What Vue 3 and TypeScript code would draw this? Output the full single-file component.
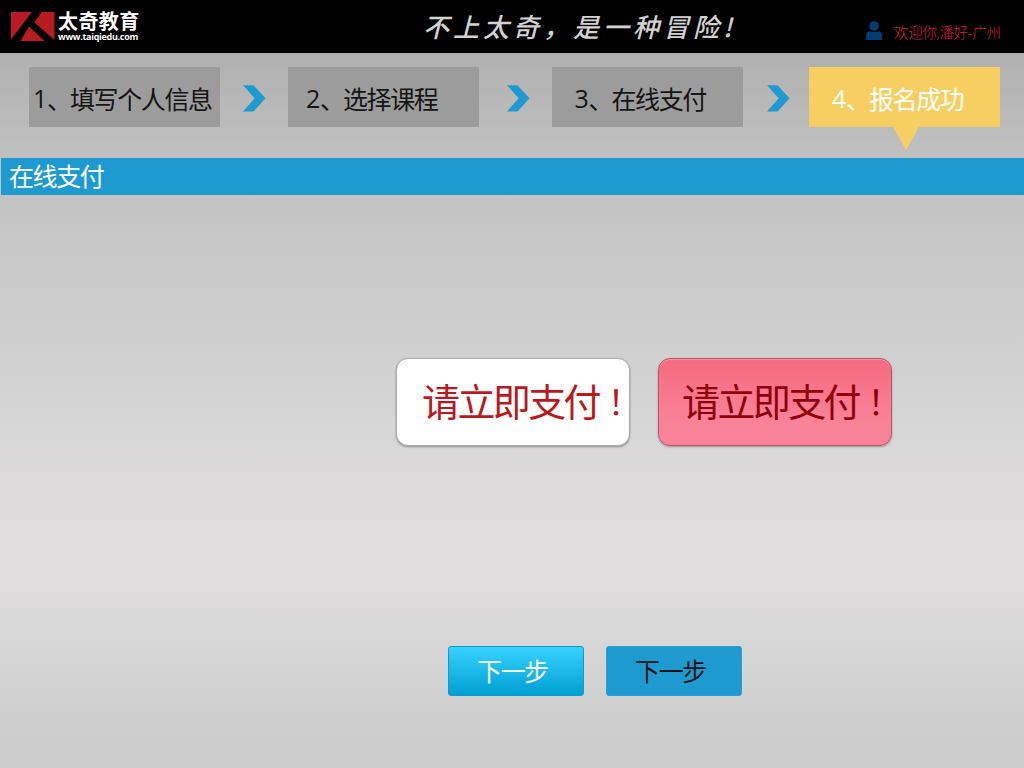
<script setup lang="ts">
interface Step {
  num: number
  label: string
  active: boolean
}

const steps: Step[] = [
  { num: 1, label: '填写个人信息', active: false },
  { num: 2, label: '选择课程', active: false },
  { num: 3, label: '在线支付', active: false },
  { num: 4, label: '报名成功', active: true },
]
</script>

<template>
  <div class="page">
    <header class="header">
      <div class="brand">
        <svg class="mark" width="44" height="29" viewBox="0 0 44 29">
          <path d="M0 0H21L0 27.5Z" fill="#b81c22" />
          <path d="M30.5 0H43.5V28L23.5 10.5Z" fill="#b81c22" />
          <path d="M18 14.5L33.5 29H9.5Z" fill="#b81c22" />
        </svg>
        <div class="brand-text">
          <span class="brand-name">太奇教育</span>
          <span class="brand-url">www.taiqiedu.com</span>
        </div>
      </div>
      <div class="slogan">不上太奇，是一种冒险!</div>
      <div class="user">
        <svg width="17" height="19" viewBox="0 0 17 19">
          <circle cx="8.1" cy="5" r="4.8" fill="#053b73" />
          <path d="M0 19V14.5Q0 10.2 4 10.2Q8.1 12 12.2 10.2Q16 10.2 16 14.5V19Z" fill="#053b73" />
        </svg>
        <span class="welcome">欢迎你,潘好-广州</span>
      </div>
    </header>

    <nav class="steps">
      <template v-for="step in steps" :key="step.num">
        <svg v-if="step.num > 1" :class="['arrow', 'arrow-' + step.num]" width="23" height="27" viewBox="0 0 23 27">
          <path d="M0 0.3H10.5L22.5 13.3L10.5 26.5H0L11.7 13.3Z" fill="#1f9ad0" />
        </svg>
        <div :class="['step', 'step-' + step.num, { active: step.active }]">
          <span class="num">{{ step.num }}</span><span class="mark-sep">、</span><span>{{ step.label }}</span>
        </div>
      </template>
    </nav>

    <h1 class="title">在线支付</h1>

    <div class="pay-row">
      <button class="pay plain"><span>请立即支付</span><span class="bang">！</span></button>
      <button class="pay hot"><span>请立即支付</span><span class="bang">！</span></button>
    </div>

    <div class="next-row">
      <button class="next bright">下一步</button>
      <button class="next flat">下一步</button>
    </div>
  </div>
</template>

<style>
body { margin: 0; overflow: hidden; }
</style>

<style scoped>
.page {
  width: 1024px;
  height: 768px;
  overflow: hidden;
  font-family: "Open Sans", "Noto Sans CJK SC", sans-serif;
  background: linear-gradient(#adabac 0, #b1b1b1 60px, #bfbfbf 145px, #c7c7c7 240px, #d0d0d0 350px, #dddbdc 490px, #dedcdd 590px, #d0d0d0 705px, #cbcbcb 768px);
}
.page, button { box-sizing: border-box; }
.header {
  height: 53px;
  display: flex;
  background: #000;
}
.brand {
  display: flex;
  padding: 12px 0 0 11px;
  width: 423px;
  box-sizing: border-box;
}
.brand-text {
  display: flex;
  flex-direction: column;
  margin: -1px 0 0 3px;
  color: #fff;
  white-space: nowrap;
}
.brand-name {
  font: 700 20px/20px "Noto Sans CJK SC", sans-serif;
  letter-spacing: 0.4px;
}
.brand-url {
  font: 700 9px/12px "Open Sans", sans-serif;
  letter-spacing: -0.3px;
}
.slogan {
  width: 432px;
  padding-top: 6px;
  box-sizing: border-box;
  font: italic 500 26px/40px "Noto Sans CJK SC", sans-serif;
  letter-spacing: 4px;
  color: #d2d2d2;
  white-space: nowrap;
}
.user {
  display: flex;
  padding: 21px 0 0 11px;
}
.welcome {
  margin-left: 11px;
  font: 300 14.5px/24px "Open Sans", "Noto Sans CJK SC", sans-serif;
  letter-spacing: -0.3px;
  color: #d8232b;
  white-space: nowrap;
}
.steps {
  display: flex;
  padding: 14px 0 0 29px;
  height: 105px;
  box-sizing: border-box;
}
.step {
  position: relative;
  width: 191px;
  height: 60px;
  flex: none;
  box-sizing: border-box;
  display: flex;
  background: #9c9c9c;
  color: #151515;
  font-size: 25px;
  line-height: 64px;
  letter-spacing: -1.4px;
  white-space: nowrap;
}
.step-1 { padding-left: 4px; }
.step-2 { padding-left: 18px; }
.step-3, .step-4 { padding-left: 23px; }
.num { width: 14px; line-height: 62px; }
.mark-sep { width: 23px; }
.active { background: #f6ce62; color: #fff; }
.active::after {
  content: "";
  position: absolute;
  left: 84px;
  top: 60px;
  border: solid transparent;
  border-width: 23px 13px 0;
  border-top-color: #f6ce62;
}
.arrow { flex: none; margin-top: 18px; }
.arrow-2 { margin-left: 23px; margin-right: 22px; }
.arrow-3 { margin-left: 28px; margin-right: 21.5px; }
.arrow-4 { margin-left: 24.5px; margin-right: 19px; }
.title {
  height: 37.4px;
  margin: 0 0 0 1px;
  padding-left: 8px;
  background: #1f9ad0;
  color: #fff;
  font-size: 25px;
  font-weight: 400;
  line-height: 37px;
  letter-spacing: -1.4px;
}
.pay-row {
  display: flex;
  gap: 28px;
  padding: 162.6px 0 0 396px;
}
.pay {
  width: 234px;
  height: 88px;
  border-radius: 12px;
  font: 400 38px/82px "Noto Sans CJK SC", sans-serif;
  letter-spacing: -2.6px;
  display: flex;
  align-items: flex-start;
  white-space: nowrap;
}
.bang {
  font: 400 34px/84px "Noto Sans CJK TC", sans-serif;
  letter-spacing: 0;
}
.plain {
  padding: 0 0 0 25px;
  color: #b8191f;
  background: #fff;
  border: 1px solid #aaa;
  box-shadow: 0 1px 2px rgba(0, 0, 0, 0.35);
}
.hot {
  padding: 0 0 0 23px;
  color: #90000a;
  background: linear-gradient(#f66a7e, #f88298 70%, #f88298);
  border: 1px solid #bd5266;
  box-shadow: inset 0 1px 1px rgba(255, 255, 255, 0.35), 0 1px 2px rgba(0, 0, 0, 0.3);
}
.next-row {
  display: flex;
  gap: 22px;
  padding: 200px 0 0 448px;
}
.next {
  width: 136px;
  height: 50px;
  padding: 0 7px 1px 0;
  border-radius: 3px;
  font: 400 25px/47px "Noto Sans CJK SC", sans-serif;
  letter-spacing: -1.4px;
}
.bright {
  color: #fff;
  background: linear-gradient(#38d2ff, #00a0d2);
  border: 1px solid #0b9dcb;
}
.flat {
  color: #151515;
  background: #1f9ad0;
  border: 1px solid #2b9dcf;
}
</style>
